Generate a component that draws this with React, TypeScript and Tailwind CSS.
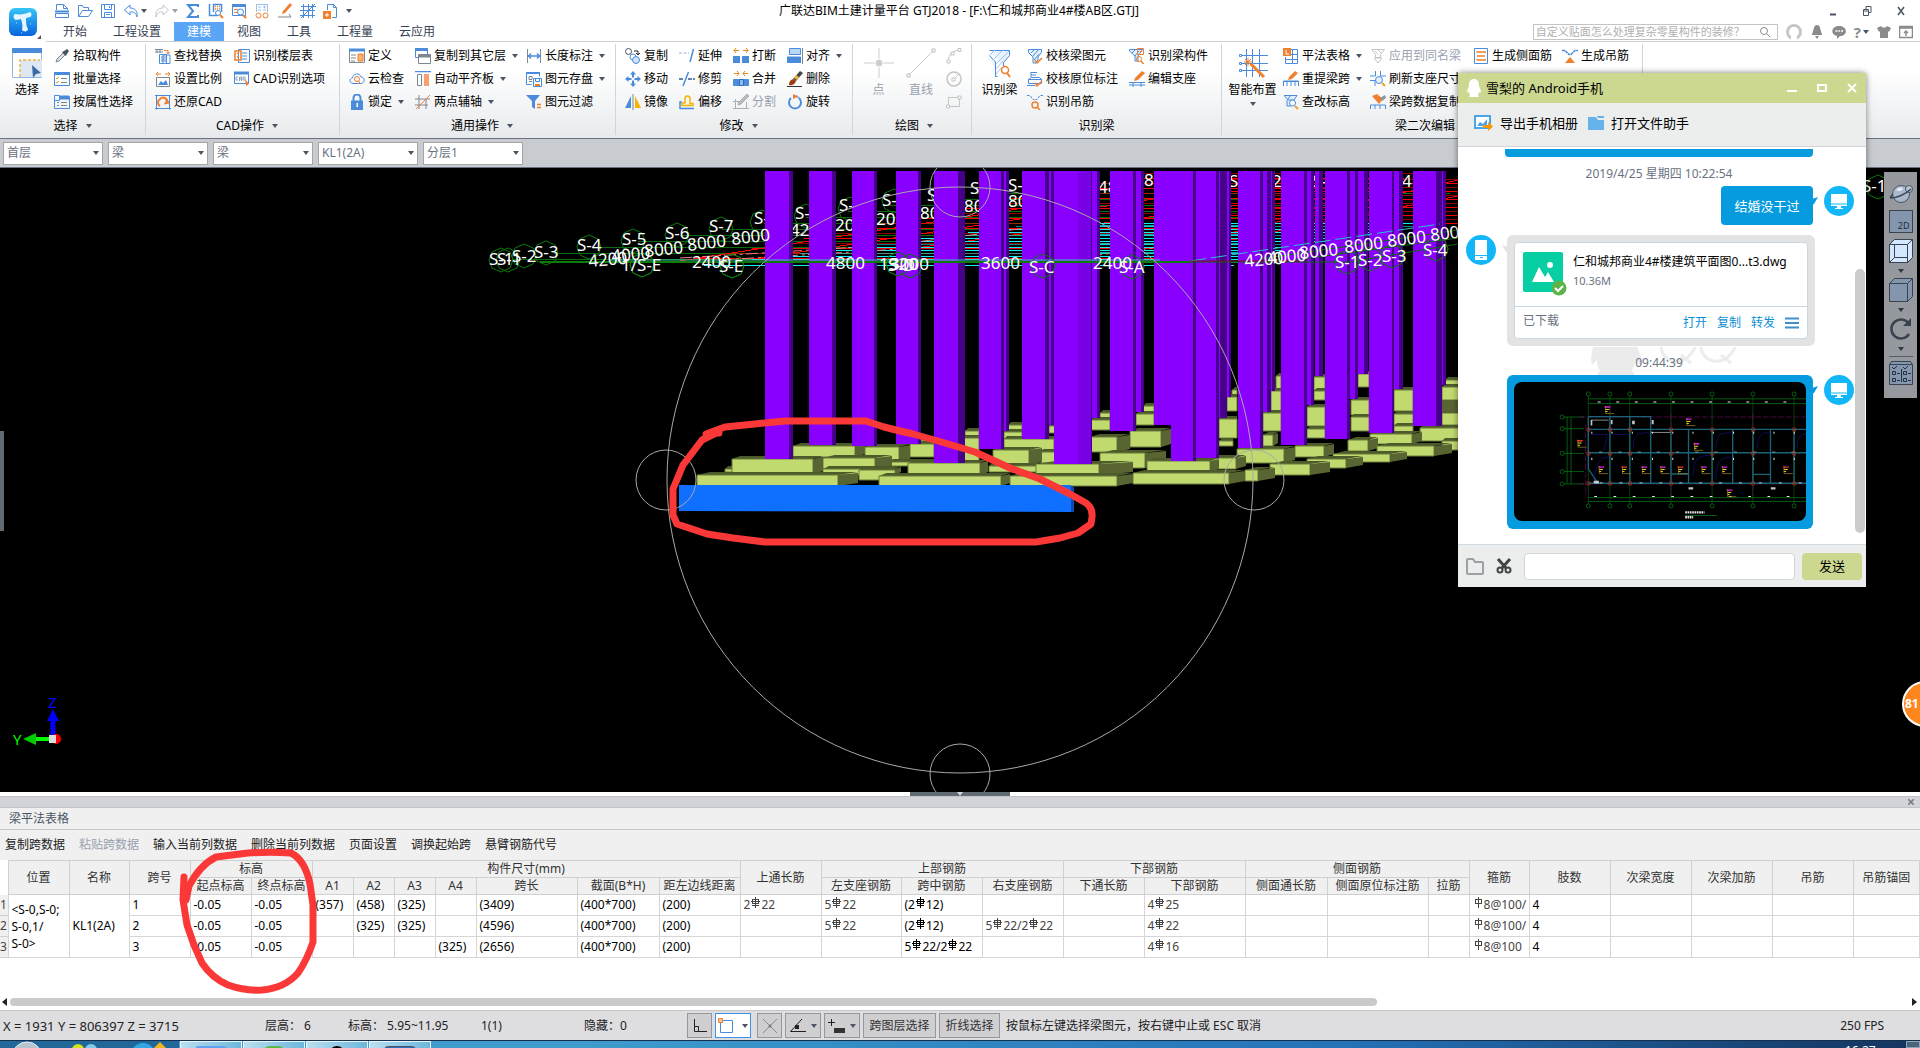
import React from 'react';

const B = '#4a8cdb';
const O = '#f07f2e';
const G = '#7d8790';

const ICONS: Record<string, React.ReactNode> = {
    newFile: <g fill="none" stroke={B}><path d="M2.5 7V1.500h7l4 4V7M9.500 1.500v4h4M1.500 14.500v-4h13v4z" /><path d="M1 8.500h14" strokeWidth="2" /></g>,
    open: <g fill="none" stroke={B}><path d="M1.500 13.500v-11h4l1 2h5v3M1.500 13.500l4-6h10l-4 6z" /></g>,
    save: <g fill="none" stroke={B}><path d="M1.500 1.500h13v13h-13zM4.500 1.500v5h7v-5M4.500 14.500v-5h7v5M6 11.500h4M9.500 3v2" /></g>,
    undo: <path d="M7 2L1.500 7 7 12V9c4-.5 6 1 7 5 1-6-2-9-7-9z" fill="none" stroke={B} />,
    redo: <path d="M9 2l5.500 5L9 12V9c-4-.5-6 1-7 5-1-6 2-9 7-9z" fill="none" stroke="#c4c7ca" />,
    sum: <path d="M13 4V2H3l5 6-5 6h10v-2" fill="none" stroke={B} strokeWidth="2" />,
    calcFind: <g fill="none" stroke={B}><path d="M1.500 1v11.500h8M5.500 1v8M13.500 1v8M5.500 1.500h8" strokeWidth="1.500" /><path d="M7 3.500h5M7 6h5" stroke={O} strokeDasharray="1 1" strokeWidth="1.500" /><circle cx="10" cy="10" r="2.500" /><path d="M12 12l3 3" stroke={O} strokeWidth="2" /></g>,
    pageFind: <g fill="none" stroke={B}><path d="M1.500 1.500h13v11h-13z" /><path d="M1 2.500h14" strokeWidth="3" /><path d="M3 6.500h4M3 9.500h3" stroke={O} /><circle cx="9.500" cy="9" r="3" fill="#fff" /><path d="M12 12l3 3" stroke={O} strokeWidth="2" /></g>,
    glasses: <g fill="none" stroke="#9cc0ea"><path d="M2.500 9V1.500h11V9M4 4h3M9 4h3M4 7h3M9 7h3M10.500 2.500v3" /><circle cx="4.500" cy="12.500" r="2.500" stroke={O} /><circle cx="11.500" cy="12.500" r="2.500" stroke={O} /></g>,
    pen: <g><path d="M13 0l2 2-7 8-3 1 1-3z" fill={O} /><path d="M1 14h13l-2-3" fill="none" stroke={G} /></g>,
    gridLines: <g stroke={B} fill="none"><path d="M1 3.500h15M0 7.500h15M0 12.500h15M3.500 1v14M8.500 1v14M12.500 1v14M1 15L15 1" /></g>,
    addDoc: <g fill="none" stroke={B}><path d="M4.500 7V1.500h6l3 3v10H9M10.500 1.500v3h3" /><path d="M0 8h8v8H0z" fill={O} stroke="none" /><path d="M4 10v4M2 12h4" stroke="#fff" /></g>,
    picker: <g><path d="M2 14l1-3 6-6 2 2-6 6z" fill="#d9e2ea" stroke={G} /><path d="M8 4l4 4 1-2 2-3-2-2-3 2z" fill="#4a5560" /></g>,
    batch: <g fill="none" stroke={B}><path d="M.500 1.500h15v13H.500z" /><path d="M0 2.500h16" strokeWidth="3" /><path d="M2 7l1 1 2-2M2 11l1 1 2-2" stroke="#f0a030" /><path d="M7 7.500h6M7 11.500h6" stroke={G} /></g>,
    attr: <g fill="none" stroke={B}><path d="M.500 1.500h5v5h-5zM.500 4.500v10h15v-12h-9" /><path d="M6 3.500h9" strokeWidth="4" /><path d="M3 8.500h2M7 8.500h6M3 11.500h2M7 11.500h6" stroke={G} /></g>,
    replace: <g fill="none" stroke={G}><path d="M0 1.500h8M0 4h8M2 1v4M5 1v4" /><path d="M9 2.500h4v3M11.500 4l1.500 2 1.500-2" stroke={O} /><path d="M4.500 6.500h7v9h-7zM6 9h6M6 11h6M6 13h6" stroke={B} /><path d="M8 7h7v8.500H8z" stroke={B} /></g>,
    scale: <g><path d="M1 3h5M10 3h5M3 1L1 3l2 2M13 1l2 2-2 2" fill="none" stroke={O} /><path d="M1.500 6.500h13v9h-13z" fill="#fff" stroke={G} /><path d="M3 14l3-4 2 2 3-3 2 5z" fill={B} /></g>,
    restore: <g fill="none" stroke={B}><path d="M1.500 1v14.500M14.500 1v14.500M0 1.500h16M0 14.500h16" /><path d="M5 12a4 4 0 0 1 0-7 4 4 0 0 1 7 2" stroke={O} strokeWidth="2" /><path d="M9 10l5-1-2-4" fill={O} stroke={O} /></g>,
    floor: <g fill="none" stroke={B}><path d="M4.500 1.500h11v13h-11zM8 5h5M8 8h5M8 11h5" /><path d="M1 3h6v9H1zM3 5.500h2M3 9h2" stroke={O} strokeWidth="1.500" /></g>,
    cadOpt: <g fill="none" stroke={B}><path d="M.500 1.500h14v11H.500z" /><path d="M0 2h15" strokeWidth="3" /><path d="M4 6H2v3h2M5.500 10V6h2v4M5.500 8h2M9 6h2v3H9z" stroke="#8ea4b8" /><path d="M11 8l4 5-3 2z" fill={O} stroke="none" /></g>,
    define: <g fill="none"><path d="M.500 1.500h15v13H.500z" stroke={G} /><path d="M0 2h16" stroke={B} strokeWidth="3" /><path d="M2 7h5M2 10h5M2 13h4" stroke={G} /><path d="M9 6h5v7H9z" fill="#f9b56f" stroke={O} /></g>,
    cloud: <g fill="none" stroke={B}><path d="M4 12.500C0 12 0 7.500 3.500 7 4 2 11 1.500 12 6c4 0 4.500 6 0 6.500z" /><circle cx="8" cy="8" r="2.500" stroke={O} /><path d="M9.500 10l2 3" stroke={O} /></g>,
    lock: <g><path d="M4.500 7V4a3.500 3.500 0 0 1 7 0v3" fill="none" stroke={B} strokeWidth="2" /><path d="M2 6.500h12V16H2z" fill={B} /><path d="M7.500 9h1.500v4H7.500z" fill="#fff" /></g>,
    copyLayer: <g fill="#fff" stroke={G}><path d="M.500.500h12v9H.500z" stroke={B} /><path d="M0 1.500h13" stroke={B} strokeWidth="3" /><path d="M3.500 6.500h12v9h-12z" /><path d="M3 8h13" strokeWidth="3" /></g>,
    alignTop: <g><path d="M0 .500h16" stroke={B} strokeWidth="1.500" /><path d="M2.500 3.500h4v11h-4z" fill="#fff" stroke={G} /><path d="M9 3h5v12H9z" fill="#f9a070" /></g>,
    twoPoint: <g fill="none" stroke={G}><path d="M0 5h15M0 11h13M4 1v14M11 5v10" /><path d="M1 15L15 1" stroke={O} /></g>,
    length: <g fill="none" stroke={B}><path d="M1.500 1v14M14.500 1v14" stroke={G} /><path d="M3 8h10M5 5.500L2.500 8 5 10.500M11 5.500L13.500 8 11 10.500" strokeWidth="1.500" /></g>,
    disk: <g fill="none" stroke={B}><path d="M.500 1.500h13v4M.500 1.500v12h5" /><path d="M0 2h14" strokeWidth="2" /><path d="M3 5.500h3v3H3zM3 10.500h3" stroke={G} /><path d="M7.500 7.500h8v8h-8zM9.500 8v2.500h4V8" stroke={B} fill="#fff" /><path d="M9 13h5v2H9z" fill={O} stroke="none" /></g>,
    filter: <g><path d="M0 1h14L9 7v8l-3-2V7z" fill={B} /><path d="M11 10.500h4M11 13.500h4" stroke={O} strokeWidth="1.500" /></g>,
    copy: <g fill="none" stroke="#4b5662"><circle cx="3.500" cy="3.500" r="3" /><path d="M9 3h4v3M11 5l2 2 2-2" stroke="#222" /><circle cx="8" cy="9" r="3" stroke={B} /><circle cx="11" cy="12" r="3.500" fill="#cfe2f8" stroke={B} /></g>,
    move: <g fill={B}><path d="M8 0l3 3.500H5zM8 16l3-3.500H5zM0 8l3.500-3v6zM16 8l-3.500-3v6z" /><path d="M8 3v3.500M8 9.500V13M3 8h3.500M9.500 8H13" stroke={B} strokeWidth="2" /></g>,
    mirror: <g><path d="M6 2v12H0z" fill={B} /><path d="M10 2v12h6z" fill="#f7b500" /><path d="M8 0v16" stroke={G} /></g>,
    extend: <g fill="none" stroke={B}><path d="M0 5h10" strokeDasharray="3 1.500" stroke="#8fb2da" /><path d="M14.500 1L11 14" strokeWidth="1.500" /></g>,
    trim: <g fill="none" stroke="#365d8c"><path d="M0 8h5M9 8h7" strokeDasharray="4 1" strokeWidth="1.500" /><path d="M9.500 1L4 15" stroke={B} strokeWidth="1.500" /></g>,
    offset: <g fill="none"><path d="M3 11.500h11v-2h-3V5c0-4-5-4-5 0v4H3z" stroke="#f7b500" strokeWidth="1.500" /><path d="M1 15V8h2M1 14.500h14" stroke={B} strokeWidth="1.500" /></g>,
    breakIt: <g><path d="M1 2.500h5M10 2.500h5M3 0L1 2.500 3 5M13 0l2 2.500L13 5" fill="none" stroke="#e08a1a" /><path d="M0 8h7v7H0zM9 8h7v7H9z" fill={B} /></g>,
    merge: <g><path d="M1 2.500h5M10 2.500h5M4 0l2 2.500L4 5M12 0l-2 2.500L12 5" fill="none" stroke="#e08a1a" /><path d="M.500 8.500h15v6H.500z" fill={B} stroke={B} /><path d="M6.500 8.500h4v6h-4z" fill="#8dbcf2" stroke="#2c6cb8" /></g>,
    split: <g fill="none" stroke="#a9aeb3"><path d="M0 7.500h7M2.500 5v10M0 14.500h16M13.500 8v7" /><path d="M14 0l2 2-8 8-3 1 1-3z" fill="#b9bdc1" /></g>,
    align: <g><path d="M2.500 .500h11v6h-11z" fill="#b9d6f6" stroke={B} /><path d="M0 8.500h14V15H0z" fill={B} /><path d="M15.500 0v16" stroke={G} /></g>,
    remove: <g><path d="M13 0l3 2-7 8-3-2z" fill="#444" /><path d="M9 4l3 2-2 3-3-2z" fill="#f0b53c" /><path d="M6 8l3 2c-1 4-5 5-7 4 0-3 1-5 4-6z" fill="#9c3e12" /><path d="M0 15.500h15" stroke="#333" /></g>,
    rotate: <g fill="none"><path d="M12 4a6 6 0 1 1-8 0" stroke={B} strokeWidth="2" /><path d="M12 4a6 6 0 0 0-5-2" stroke="#8fb8ea" strokeWidth="2" /><path d="M6 0l5 2.500L6 5z" fill={O} /></g>,
    arc: <g fill="none" stroke="#c4c4c4"><path d="M2 14C2 7 7 2 14 2" /><path d="M1 12h3v3H1zM5 4h3v3H5zM12 .500h3v3h-3z" fill="#fff" /></g>,
    circle: <g fill="none" stroke="#c4c4c4"><circle cx="8" cy="8" r="7" strokeWidth="1.500" /><path d="M7 9l6-6" /><path d="M6 7h3v3H6z" fill="#fff" /></g>,
    rect: <g fill="none" stroke="#c4c4c4"><path d="M2.500 3.500h11v9h-11z" /><path d="M.500 11h3v3h-3zM12 2h3v3h-3z" fill="#fff" /></g>,
    beamCheck: <g fill="none" stroke={B}><path d="M1.500 1.500h13v3L11 9v3l-2 3H6V9L1.500 4.500z" fill="#e3effc" /><path d="M4 5l4-4M6 8l6-7M7 12l5-6" /><path d="M8 12l2 3 5-5" stroke={O} strokeWidth="1.500" /></g>,
    noteCheck: <g fill="none" stroke={B}><path d="M4 1v5M4 1.500h6M4 4h5M1.500 12.500v-4l3-2h8l2 2v4zM0 14.500h8M1.500 8.500h13" /><path d="M8 12l2 3 5-5" stroke={O} strokeWidth="1.500" /></g>,
    hanger: <g fill="none" stroke={B}><path d="M0 1.500h3l3 4h4l3-4h3" strokeDasharray="2.500 1" /><circle cx="8" cy="11" r="3" stroke={O} strokeWidth="1.500" /><path d="M10 13l3 3" stroke={O} strokeWidth="1.500" /></g>,
    beamPart: <g fill="none" stroke={B}><path d="M.500 1.500h13L9 8v5H6V8L.500 3z" fill="#e3effc" /><path d="M3 5l4-4M6 8l4-5" /><path d="M8.500.500h6v6h-6zM11 3.500h2" stroke={O} /><circle cx="10" cy="11" r="2.500" stroke={O} /><path d="M12 13l2.500 3" stroke={O} strokeWidth="1.500" /></g>,
    support: <g><path d="M13 0l3 2-7 7-4 1 1-3z" fill={O} /><path d="M0 11.500h16M0 14h16M4 11v5M12 11v5" stroke={B} fill="none" /></g>,
    flatTable: <g fill="none" stroke={B}><path d="M5 1.500h9.500v14H2.500V9M9.500 1v14M2.500 11.500h12M8 6.500h6" /><path d="M0 0h8v8H0z" fill={O} stroke="none" /><path d="M3 2v4h3" stroke="#fff" /></g>,
    respan: <g fill="none" stroke={B}><path d="M12 0l3 2-6 6-4 1 1-3z" fill={O} stroke="none" /><path d="M.500 15v-5h15v5M4 10v5M8 10v5M12 10v5M0 10.500h16" /></g>,
    level: <g fill="none" stroke={B}><path d="M1 1.500h13L11 6H5L1.500 2M4 6v6h4M8 1l-3 4" fill="#e3effc" /><circle cx="9.500" cy="9" r="3" fill="#fff" /><path d="M12 12l3 3" stroke="#f0a030" strokeWidth="2" /></g>,
    applySame: <g fill="none" stroke="#c3c6c9"><path d="M1.500 1.500h13l-4 5v3h-5v-3zM5 3l3 3M7 1l4 4" /><path d="M4 10h8l-4 5z" /></g>,
    refresh: <g fill="none" stroke={B}><path d="M5.500 0v5H0M10.500 0v5H16M0 9.500h5V15" /><circle cx="9" cy="9" r="3.500" fill="#e3effc" /><path d="M12 12l3 3" stroke="#f0a030" strokeWidth="2" /></g>,
    spanCopy: <g><path d="M2 2l5-2 6 5-4 5z" fill={O} /><path d="M10 4l5-3 1 3-4 3z" fill="#8c959c" /><path d="M.500 15v-4h15v4M5 11v4M10 11v4" fill="none" stroke={B} /></g>,
    sideBar: <g fill="none" stroke={B}><path d="M1.500.500h13v15h-13z" /><path d="M4 4.500V4h8v1M4 8h8M4 12h8v-1M4 12v-1" stroke={O} strokeWidth="1.500" /></g>,
    genHanger: <g fill="none" stroke={B}><path d="M0 2.500h3l4 4h2l4-4h3" strokeWidth="1.500" strokeDasharray="3 .500" /><path d="M8 9l5 6H3z" fill={O} stroke="none" /></g>,
};

const Icon = ({ name, className = 'w-4 h-4' }: { name: string; className?: string }) => (
    <svg viewBox="0 0 16 16" className={`${className} shrink-0`}>{ICONS[name]}</svg>
);

const Caret = ({ className = 'text-gray-600' }: { className?: string }) => (
    <svg viewBox="0 0 6 4" className={`w-[6px] h-[4px] shrink-0 ${className}`}><path d="M0 0h6L3 4z" fill="currentColor" /></svg>
);

type Tool = { icon: string; label?: string; menu?: boolean; off?: boolean };

const ToolCol = ({ items, className }: { items: Tool[]; className: string }) => (
    <div className={`flex flex-col shrink-0 ${className}`}>
        {items.map((t) => (
            <button key={t.icon} disabled={t.off} className={`h-[23px] flex items-center gap-[3px] whitespace-nowrap ${t.off ? 'text-gray-400' : 'text-black'}`}>
                <Icon name={t.icon} />
                {t.label && <span>{t.label}</span>}
                {t.menu && <span className="pl-[3px]"><Caret /></span>}
            </button>
        ))}
    </div>
);

const Group = ({ title, menu = true, className, children }: { title: string; menu?: boolean; className: string; children: React.ReactNode }) => (
    <section className={`flex flex-col shrink-0 border-r border-gray-300 ${className}`}>
        <div className="h-[70px] flex">{children}</div>
        <div className="flex-1 flex items-center justify-center gap-2 pt-[3px] whitespace-nowrap">
            {title}
            {menu && <Caret />}
        </div>
    </section>
);

const BigButton = ({ label, className, off, menu, children }: { label: string; className: string; off?: boolean; menu?: boolean; children: React.ReactNode }) => (
    <button className={`flex flex-col items-center shrink-0 pt-1 ${off ? 'text-gray-400' : 'text-black'} ${className}`}>
        {children}
        <span className="mt-1 leading-4 whitespace-nowrap">{label}</span>
        {menu && <span className="mt-1"><Caret /></span>}
    </button>
);

const QUICK = ['newFile', 'open', 'save', 'undo', 'redo', 'sum', 'calcFind', 'pageFind', 'glasses', 'pen', 'gridLines', 'addDoc'];
const TABS = ['开始', '工程设置', '建模', '视图', '工具', '工程量', '云应用'];

function Header() {
    return (
        <header className="h-[42px] flex bg-white shrink-0">
            <div className="w-[46px] relative shrink-0 pt-2 pl-[9px]">
                <svg viewBox="0 0 28 28" className="w-7 h-7">
                    <defs>
                        <linearGradient id="logo" x1="0" y1="0" x2="0" y2="1">
                            <stop offset="0" stopColor="#35c5f5" /><stop offset="1" stopColor="#0a63dd" />
                        </linearGradient>
                    </defs>
                    <rect width="28" height="28" rx="6" fill="url(#logo)" />
                    <path d="M6 6c5 1 10 0 15-2 2 1 2 4 0 5l-4 1c0 4 0 8 2 11 0 3-5 3-6 1 1-4 0-8-1-11l-5 1c-3-1-3-5-1-6z" fill="#e4f6ff" />
                    <path d="M7 15h1M21 16h1M12 25h1" stroke="#bfe9ff" />
                </svg>
                <svg viewBox="0 0 4 4" className="absolute right-[5px] bottom-[3px] w-1 h-1"><path d="M4 0v4H0z" fill="#555" /></svg>
            </div>
            <div className="flex-1 flex flex-col border-b border-[#cfcfcf]">
                <div className="h-[22px] grid grid-cols-[1fr_auto_1fr] items-center">
                    <div className="flex items-center gap-[7px] pl-2">
                        {QUICK.map((q) => (
                            <button key={q} className="flex items-center gap-[2px]">
                                <Icon name={q} />
                                {q === 'undo' && <Caret />}
                                {q === 'redo' && <Caret className="text-gray-400" />}
                            </button>
                        ))}
                        <Caret />
                    </div>
                    <h1 className="pr-[48px]">广联达BIM土建计量平台 GTJ2018 - [F:\仁和城邦商业4#楼AB区.GTJ]</h1>
                    <div className="flex justify-end gap-5 pr-3 text-gray-600">
                        <button aria-label="最小化"><svg viewBox="0 0 14 14" className="w-[14px] h-[14px]"><path d="M4 10.500h6" stroke="currentColor" strokeWidth="2" /></svg></button>
                        <button aria-label="还原"><svg viewBox="0 0 14 14" className="w-[14px] h-[14px]"><path d="M3.500 5.500h5v6h-5zM6 5V2.500h5v6H9M3 7h6" fill="none" stroke="currentColor" /></svg></button>
                        <button aria-label="关闭"><svg viewBox="0 0 14 14" className="w-[14px] h-[14px]"><path d="M4 3l6 8M10 3l-6 8" fill="none" stroke="currentColor" strokeWidth="1.500" /></svg></button>
                    </div>
                </div>
                <div className="h-[19px] flex items-stretch">
                    <nav className="flex pl-1">
                        {TABS.map((t) => (
                            <button key={t} className={`px-[13px] text-[12px] ${t === '建模' ? 'bg-[#5aa5f5] text-white' : 'text-gray-700'}`}>{t}</button>
                        ))}
                    </nav>
                    <div className="ml-auto flex items-center gap-2 pr-[7px] text-[#8b8b8b]">
                        <label className="w-[245px] h-4 flex items-center border border-[#c4c4c4] px-[2px]">
                            <input aria-label="搜索" placeholder="自定义贴面怎么处理复杂零星构件的装修？" className="flex-1 min-w-0 outline-none text-[11px] placeholder:text-[#b0b0b0]" />
                            <svg viewBox="0 0 12 12" className="w-3 h-3 mr-1"><circle cx="5" cy="5" r="3.500" fill="none" stroke="currentColor" /><path d="M8 8l3 3" stroke="currentColor" /></svg>
                        </label>
                        <svg viewBox="0 0 16 16" className="w-4 h-4"><circle cx="8" cy="8" r="6.500" fill="none" stroke="#c6c6c6" strokeWidth="3" /><circle cx="8" cy="7" r="4" fill="#fff" /><path d="M5 16v-4h6v4z" fill="#fff" /></svg>
                        <svg viewBox="0 0 14 14" className="w-[14px] h-[14px]"><path d="M7 0c4 0 3 6 5 9v1H2V9c2-3 1-9 5-9zM5 11h4l-2 3z" fill="currentColor" /></svg>
                        <svg viewBox="0 0 14 14" className="w-[14px] h-[14px]"><path d="M7 1c9 0 9 10 1 10l-3 3v-3C-2 10-1 1 7 1z" fill="currentColor" /><path d="M3.500 6h2M6.500 6h1.500M9 6h2" stroke="#fff" strokeWidth="1.500" /></svg>
                        <span className="flex items-center gap-[2px] text-[15px] font-bold">?<Caret /></span>
                        <svg viewBox="0 0 14 14" className="w-[14px] h-[14px]"><path d="M0 3l4-2c1 2 5 2 6 0l4 2-2 4-1-1v7H3V6L2 7z" fill="currentColor" /></svg>
                        <svg viewBox="0 0 14 14" className="w-[14px] h-[14px]"><path d="M.500 1.500h13v11H.500zM0 3h14M7 11V6M5 8l2-2 2 2" fill="none" stroke="currentColor" strokeWidth="1.500" /></svg>
                    </div>
                </div>
            </div>
        </header>
    );
}

function Ribbon() {
    return (
        <div className="h-[97px] flex shrink-0 pt-[2px] pb-[3px] bg-gradient-to-b from-white from-30% to-[#e7eaec] border-b border-gray-500 overflow-hidden">
            <Group title="选择" className="w-[146px]">
                <BigButton label="选择" className="w-[54px]">
                    <svg viewBox="0 0 30 30" className="w-[30px] h-[30px]">
                        <path d="M.500.500h29v29H.500z" fill="#fff" stroke="#8fb8e4" /><path d="M0 0h30v5H0z" fill={B} />
                        <path d="M8 12h22v17H8z" fill="#dfe7f2" /><path d="M8 29V12h20" fill="none" stroke="#f0b53c" strokeWidth="1.500" strokeDasharray="3 2" />
                        <path d="M20 17l9 8-5 1-3 4z" fill="#3a6ba5" />
                    </svg>
                </BigButton>
                <ToolCol className="w-[90px]" items={[{ icon: 'picker', label: '拾取构件' }, { icon: 'batch', label: '批量选择' }, { icon: 'attr', label: '按属性选择' }]} />
            </Group>
            <Group title="CAD操作" className="w-[194px] pl-[9px]">
                <ToolCol className="w-[79px]" items={[{ icon: 'replace', label: '查找替换' }, { icon: 'scale', label: '设置比例' }, { icon: 'restore', label: '还原CAD' }]} />
                <ToolCol className="w-[100px]" items={[{ icon: 'floor', label: '识别楼层表' }, { icon: 'cadOpt', label: 'CAD识别选项' }]} />
            </Group>
            <Group title="通用操作" className="w-[276px] pl-[9px]">
                <ToolCol className="w-[66px]" items={[{ icon: 'define', label: '定义' }, { icon: 'cloud', label: '云检查' }, { icon: 'lock', label: '锁定', menu: true }]} />
                <ToolCol className="w-[111px]" items={[{ icon: 'copyLayer', label: '复制到其它层', menu: true }, { icon: 'alignTop', label: '自动平齐板', menu: true }, { icon: 'twoPoint', label: '两点辅轴', menu: true }]} />
                <ToolCol className="w-[86px]" items={[{ icon: 'length', label: '长度标注', menu: true }, { icon: 'disk', label: '图元存盘', menu: true }, { icon: 'filter', label: '图元过滤' }]} />
            </Group>
            <Group title="修改" className="w-[237px] pl-[9px]">
                <ToolCol className="w-[54px]" items={[{ icon: 'copy', label: '复制' }, { icon: 'move', label: '移动' }, { icon: 'mirror', label: '镜像' }]} />
                <ToolCol className="w-[54px]" items={[{ icon: 'extend', label: '延伸' }, { icon: 'trim', label: '修剪' }, { icon: 'offset', label: '偏移' }]} />
                <ToolCol className="w-[54px]" items={[{ icon: 'breakIt', label: '打断' }, { icon: 'merge', label: '合并' }, { icon: 'split', label: '分割', off: true }]} />
                <ToolCol className="w-[58px]" items={[{ icon: 'align', label: '对齐', menu: true }, { icon: 'remove', label: '删除' }, { icon: 'rotate', label: '旋转' }]} />
            </Group>
            <Group title="绘图" className="w-[119px] pl-1">
                <BigButton label="点" off className="w-[43px]">
                    <svg viewBox="0 0 30 30" className="w-[30px] h-[30px]"><path d="M15 0v30M0 15h30" stroke="#cdcdcd" /><circle cx="15" cy="15" r="4" fill="#cdcdcd" stroke="#fff" /></svg>
                </BigButton>
                <BigButton label="直线" off className="w-[42px]">
                    <svg viewBox="0 0 30 30" className="w-[30px] h-[30px]"><path d="M3 27L27 3" stroke="#cdcdcd" /><path d="M1 26h3v3H1zM26 1h3v3h-3z" fill="#fff" stroke="#bbb" /></svg>
                </BigButton>
                <ToolCol className="w-5 pl-1" items={[{ icon: 'arc' }, { icon: 'circle' }, { icon: 'rect' }]} />
            </Group>
            <Group title="识别梁" menu={false} className="w-[250px]">
                <BigButton label="识别梁" className="w-[55px]">
                    <svg viewBox="0 0 30 30" className="w-[30px] h-[30px]">
                        <path d="M4.500 2.500h20v5l-6 7v4M12.500 28.500h-2V14l-6-6.500" fill="#eaf3fd" stroke={B} />
                        <path d="M4 8l6-6M8 12L18 2M11 16L24 3M11 21l7-8M11 26l5-6" stroke="#9cc4f0" />
                        <circle cx="20" cy="22" r="3.500" fill="none" stroke={O} strokeWidth="1.500" /><path d="M22 25l3 4" stroke={O} strokeWidth="2" />
                    </svg>
                </BigButton>
                <ToolCol className="w-[102px]" items={[{ icon: 'beamCheck', label: '校核梁图元' }, { icon: 'noteCheck', label: '校核原位标注' }, { icon: 'hanger', label: '识别吊筋' }]} />
                <ToolCol className="w-[86px]" items={[{ icon: 'beamPart', label: '识别梁构件' }, { icon: 'support', label: '编辑支座' }]} />
            </Group>
            <Group title="梁二次编辑" className="w-[421px]">
                <BigButton label="智能布置" menu className="w-[61px]">
                    <svg viewBox="0 0 30 30" className="w-[30px] h-[30px]">
                        <path d="M8.500 1v28M14.500 1v28M21.500 1v28M4 7.500h26M4 15.500h26M4 22.500h26" stroke={B} />
                        <path d="M1.500 6.500h2v2h-2zM1.500 14.500h2v2h-2zM1.500 21.500h2v2h-2z" fill="#fff" stroke={B} />
                        <path d="M13 16l13 13" stroke={O} strokeWidth="3" /><path d="M10 10v8M6 14h8M7 11l6 6M13 11l-6 6" stroke={O} />
                    </svg>
                </BigButton>
                <ToolCol className="w-[87px]" items={[{ icon: 'flatTable', label: '平法表格', menu: true }, { icon: 'respan', label: '重提梁跨', menu: true }, { icon: 'level', label: '查改标高' }]} />
                <ToolCol className="w-[103px]" items={[{ icon: 'applySame', label: '应用到同名梁', off: true }, { icon: 'refresh', label: '刷新支座尺寸' }, { icon: 'spanCopy', label: '梁跨数据复制' }]} />
                <ToolCol className="w-[89px]" items={[{ icon: 'sideBar', label: '生成侧面筋' }]} />
                <ToolCol className="w-[70px]" items={[{ icon: 'genHanger', label: '生成吊筋' }]} />
            </Group>
        </div>
    );
}

function FilterBar() {
    return (
        <div className="h-[29px] flex items-center gap-[5px] px-[3px] shrink-0 bg-[#c8cbcf] border-b border-gray-500">
            {['首层', '梁', '梁', 'KL1(2A)', '分层1'].map((v, i) => (
                <div key={i} className="relative w-[100px] h-[23px]">
                    <select aria-label={`筛选${i + 1}`} className="w-full h-full appearance-none bg-white border border-[#a5a5a5] px-[3px] text-gray-500">
                        <option>{v}</option>
                    </select>
                    <span className="absolute right-1 top-0 h-full flex items-center pointer-events-none"><Caret /></span>
                </div>
            ))}
        </div>
    );
}

// footing blocks: front face x1, y1, x2, y2, then depth of the side face
const SLABS = [
    [697, 475, 838, 486, 20], [732, 459, 813, 474, 10], [725, 469, 733, 472, 0], [793, 446, 855, 457, 10], [823, 458, 875, 469, 17],
    [823, 469, 895, 475, 6], [859, 470, 895, 480, 0], [865, 447, 899, 462, 11], [910, 444, 934, 457, 0], [908, 463, 980, 475, 8],
    [879, 476, 1001, 486, 9], [890, 462, 934, 466, 0], [921, 440, 934, 444, 0], [962, 438, 979, 461, 0], [965, 431, 979, 437, 0],
    [989, 466, 1037, 472, 0], [1010, 476, 1117, 486, 16], [1036, 464, 1099, 475, 34], [993, 450, 1029, 465, 13], [1004, 439, 1054, 450, 0],
    [1041, 452, 1055, 463, 0], [1008, 425, 1022, 430, 0], [1004, 432, 1022, 439, 0], [1049, 426, 1055, 433, 0], [1090, 437, 1117, 452, 13],
    [1100, 453, 1145, 468, 21], [1091, 420, 1110, 430, 0], [1100, 413, 1110, 418, 0], [1130, 431, 1161, 447, 10], [1136, 414, 1154, 425, 0],
    [1143, 406, 1154, 412, 0], [1133, 473, 1229, 484, 16], [1147, 461, 1210, 472, 9], [1196, 458, 1236, 469, 10],
    [1219, 419, 1237, 438, 0], [1219, 441, 1233, 446, 0], [1227, 397, 1237, 411, 0], [1232, 390, 1237, 395, 0], [1237, 449, 1284, 463, 11],
    [1245, 470, 1258, 481, 17], [1270, 464, 1310, 475, 20], [1263, 413, 1281, 431, 0], [1271, 391, 1281, 411, 0], [1276, 376, 1281, 389, 0],
    [1263, 435, 1273, 446, 5], [1295, 446, 1324, 457, 10], [1307, 459, 1346, 468, 17], [1307, 407, 1325, 426, 0], [1314, 377, 1325, 390, 0],
    [1314, 391, 1325, 400, 0], [1307, 429, 1325, 438, 0], [1348, 440, 1368, 451, 10], [1333, 454, 1390, 462, 17], [1351, 400, 1369, 415, 0],
    [1358, 374, 1369, 387, 0], [1351, 417, 1369, 431, 0], [1370, 434, 1412, 444, 10], [1377, 446, 1434, 456, 18], [1394, 390, 1413, 411, 0],
    [1394, 414, 1413, 425, 0], [1394, 426, 1413, 432, 0], [1420, 428, 1460, 441, 0], [1442, 441, 1460, 450, 0], [1442, 387, 1460, 400, 0],
    [1445, 380, 1460, 385, 0], [1442, 413, 1460, 425, 0],
];

// columns back to front: left, bright edge, dark edge, bottom
const COLUMNS = [
    [1003, 1006, 1009, 431], [1049, 1051, 1054, 425], [1091, 1097, 1100, 418], [1136, 1141, 1144, 412], [1219, 1220, 1227, 418],
    [1227, 1229, 1231, 397], [1263, 1267, 1271, 412], [1271, 1272, 1275, 391], [1315, 1319, 1323, 376], [1307, 1311, 1314, 405],
    [1358, 1364, 1368, 374], [1350, 1355, 1358, 399], [1394, 1399, 1403, 389], [1442, 1443, 1446, 385], [765, 789, 793, 459],
    [809, 832, 836, 445], [852, 874, 877, 446], [896, 918, 921, 444], [934, 958, 965, 463], [979, 1001, 1004, 449],
    [1022, 1045, 1049, 439], [1054, 1091, 1092, 464], [1110, 1133, 1136, 431], [1154, 1193, 1196, 425], [1171, 1193, 1196, 461],
    [1196, 1216, 1219, 458], [1238, 1260, 1263, 448], [1281, 1304, 1307, 445], [1325, 1347, 1350, 439], [1369, 1392, 1394, 433], [1413, 1436, 1442, 426],
];

const BACK_LABELS: [number, number, string][] = [
    [754, 224, 'S-8'], [795, 219, 'S-9'], [790, 236, '4200'], [839, 211, 'S-10'], [835, 231, '2000'], [882, 206, 'S-11'], [876, 225, '2000'],
    [927, 201, 'S-12'], [920, 219, '8000'], [970, 194, 'S-13'], [964, 212, '8000'], [1008, 191, 'S-14'], [1008, 207, '8000'],
    [1098, 193, '4800'], [1144, 186, '8000'], [1229, 187, 'S-E'], [1272, 187, '2-1'], [1312, 187, 'S-F'], [1402, 187, '4'],
];

const LABELS: [number, number, string, number][] = [
    [489, 265, 'S-1', 0], [497, 265, 'S-1', 0], [512, 262, 'S-2', 0], [534, 258, 'S-3', 0], [577, 251, 'S-4', 0], [622, 245, 'S-5', 0],
    [665, 239, 'S-6', 0], [709, 232, 'S-7', 0], [589, 267, '4200', -5], [612, 262, '4000', -5], [645, 257, '8000', -6], [688, 251, '8000', -7],
    [732, 245, '8000', -7], [621, 271, '1/S-E', 0], [692, 268, '2400', 0], [719, 272, 'S-E', 0], [826, 269, '4800', 0], [879, 270, '1320', 0],
    [888, 271, 'S-D', 0], [890, 270, '3000', 0], [981, 269, '3600', 0], [1029, 273, 'S-C', 0], [1093, 269, '2400', 0], [1119, 273, 'S-A', 0],
    [1245, 267, '4200', -5], [1268, 264, '4000', -5], [1300, 259, '8000', -6], [1345, 253, '8000', -7], [1388, 247, '8000', -7], [1431, 241, '8000', -7],
    [1335, 268, 'S-1', 0], [1358, 266, 'S-2', 0], [1382, 262, 'S-3', 0], [1423, 256, 'S-4', 0], [1862, 192, 'S-1', 0],
];

const hexAt = (x: number, y: number) => `M${x - 12} ${y}l3-8 9-4 9 4 3 8-3 8-9 4-9-4z`;
const BUBBLES = [[501, 260], [508, 260], [524, 256], [546, 253], [589, 247], [633, 241], [677, 235], [721, 229], [762, 222], [806, 216], [850, 209], [894, 201], [642, 265], [732, 266], [898, 264], [910, 266], [1043, 266], [1132, 267], [1347, 262], [1370, 259], [1392, 256], [1436, 249], [1878, 187]];

function Viewport() {
    return (
        <main className="flex-1 min-h-0 relative bg-black overflow-hidden">
            <svg viewBox="0 168 1920 624" preserveAspectRatio="xMidYMid slice" className="absolute inset-0 w-full h-full" fontFamily="'Noto Sans', sans-serif" fontSize="17">
                <clipPath id="scene"><path d="M0 171h1458v621H0z" /></clipPath>
                <g clipPath="url(#scene)">
                    <g stroke="#0a7a0a" fill="none">
                        {BUBBLES.map(([x, y], i) => <path key={i} d={hexAt(x, y)} />)}
                    </g>
                    <g stroke="#0a6b0a" shapeRendering="crispEdges">
                        {[0, 1, 2, 3, 4, 5, 6, 7, 8, 9, 10, 11].map((i) => (
                            <path key={i} d={`M${512 + i * 42} ${259 - i * 6}H${900 + i * 50}`} />
                        ))}
                    </g>
                    <g stroke="#ff0000" shapeRendering="crispEdges">
                        {Array.from({ length: 18 }, (_, i) => {
                            const y = 258 - i * 5;
                            return <path key={i} d={`M${700 + i * 26} ${y}H${1180 + i * 14}`} opacity={i % 2 ? 0.55 : 1} />;
                        })}
                        {Array.from({ length: 12 }, (_, i) => (
                            <path key={i} d={`M${1225 + (i % 3) * 14} ${179 + i * 4}H1458`} opacity={i % 2 ? 1 : 0.6} />
                        ))}
                        <path d="M680 261L1030 207M760 258L1180 195M900 250L1240 205M1180 250L1458 196M1200 240L1458 180" />
                    </g>
                    <g stroke="#12eef5" shapeRendering="crispEdges">
                        {Array.from({ length: 15 }, (_, i) => {
                            const y = 223 + i * 3;
                            return <path key={i} d={`M${1040 - i * 24} ${y}H${1430 - i * 14}`} opacity={i % 3 === 1 ? 0.55 : 1} />;
                        })}
                        {[0, 1, 2, 3].map((i) => <path key={i} d={`M${1085 - i * 14} ${226 + i * 9}H1240`} strokeWidth="2" opacity=".7" />)}
                    </g>
                    <path d="M680 258L860 247M720 260L900 249M900 244L1050 225M1090 256L1170 246" stroke="#f08080" strokeDasharray="12 4 3 3" />
                    <g fill="#fff">
                        {BACK_LABELS.map(([x, y, t]) => <text key={`${x}-${y}`} x={x} y={y}>{t}</text>)}
                    </g>
                    {[...SLABS].sort((a, b) => a[3] - b[3]).map(([x1, y1, x2, y2, d], i) => (
                        <g key={i}>
                            <path d={`M${x1} ${y1}l${d / 2 + 3}-3H${x2 + d}L${x2} ${y1}z`} fill="#4d5a29" />
                            <path d={`M${x1} ${y1}H${x2}V${y2}H${x1}z`} fill="#c0da6f" stroke="#6b7a3c" strokeWidth="1" />
                            {d > 0 && <path d={`M${x2} ${y1}L${x2 + d} ${y1 - 2}V${y2 - 3}L${x2} ${y2}z`} fill="#596433" />}
                        </g>
                    ))}
                    <path d="M1442 400h18v13h-18z" fill="#596433" />
                    {COLUMNS.map(([x1, x2, x3, b], i) => (
                        <g key={i}>
                            <path d={`M${x1} 171H${x2}V${b}H${x1}z`} fill="#8a00ff" />
                            <path d={`M${x2} 171H${x3}V${b}H${x2}z`} fill="#46008a" />
                        </g>
                    ))}
                    <path d="M1078 171h13v293h-13z" fill="#7900e6" />
                    <path d="M1195 171h1v254h-1z" fill="#46008a" />
                    <path d="M1190 261L1440 224" stroke="#27c5cb" strokeDasharray="16 5" />
                    <path d="M1180 262H1350L1458 244M1260 259L1458 230M1280 262L1458 238" stroke="#0a6b0a" fill="none" />
                </g>
                <path d="M540 262H1190" stroke="#0c7c0c" strokeWidth="2" />
                <path d="M610 260H1160" stroke="#3fc0b0" />
                <path d="M1190 261H1300" stroke="#7c1020" />
                <g stroke="#0a7a0a" fill="none">
                    {BUBBLES.slice(12).map(([x, y], i) => <path key={i} d={hexAt(x, y)} />)}
                </g>
                <g fill="#fff">
                    {LABELS.map(([x, y, t, r]) => <text key={`${x}-${t}`} x={x} y={y} transform={`rotate(${r} ${x} ${y})`}>{t}</text>)}
                </g>
                <path d="M679 485H1071V512L679 511z" fill="#0f70ff" />
                <path d="M1071 487h3v25h-3z" fill="#0b4bb0" />
                <g fill="none" stroke="#a9a9a9">
                    <circle cx="960" cy="480" r="293" />
                    <circle cx="666" cy="480" r="30" />
                    <circle cx="1254" cy="480" r="30" />
                    <circle cx="960" cy="187" r="30" />
                    <circle cx="960" cy="774" r="30" />
                </g>
                <path d="M719 433L706 434L725 427L755 424L785 421L866 421L884 427L900 431L913 434L945 443L975 452L1010 468L1040 479L1070 494L1086 503Q1093 508 1092 517L1091 524L1078 533L1060 538L1036 542L765 542L733 538L707 534L677 524L673 515V489L683 465L702 440L718 432" fill="none" stroke="#fb3838" strokeWidth="7" strokeLinejoin="round" strokeLinecap="round" />
                <g>
                    <path d="M53 738V720" stroke="#00f" strokeWidth="5" /><path d="M47 721l6-12 6 12z" fill="#00f" />
                    <path d="M50 739H34" stroke="#0f0" strokeWidth="4" /><path d="M36 733v12l-13-6z" fill="#0c0" />
                    <circle cx="56" cy="739" r="5" fill="#f00" /><path d="M49 735h7v8h-7z" fill="#dcdcdc" />
                    <text x="48" y="708" fontSize="15" fill="#00f">Z</text>
                    <text x="13" y="745" fontSize="15" fill="#0f0">Y</text>
                </g>
            </svg>
            <div className="absolute left-0 top-[263px] w-1 h-[100px] bg-[#616b74]" />
            <ViewTools />
            <div className="absolute -right-[28px] top-[513px] w-[46px] h-[46px] rounded-full bg-[#ff861c] border-2 border-white flex items-center pl-px text-white font-bold">81</div>
        </main>
    );
}

function ViewTools() {
    const btn = 'w-6 flex items-center justify-center';
    return (
        <aside className="absolute right-[3px] top-1 w-[33px] h-[226px] bg-[#95989d] flex flex-col items-center pt-[10px]">
            <button aria-label="动态观察" className={btn}>
                <svg viewBox="0 0 24 22" className="w-6 h-[22px]"><circle cx="12" cy="12" r="8.500" fill="#a9b8cb" stroke="#4a5666" /><path d="M7 8c2-3 6-3 7-2-1 3-4 4-7 2z" fill="#e4ebf3" /><circle cx="20" cy="7" r="3.500" fill="#b9c6d6" stroke="#4a5666" /><path d="M1 16c6 0 15-3 21-9M1 16l3-4" fill="none" stroke="#3c4654" strokeWidth="1.500" /></svg>
            </button>
            <button className="mt-[6px] w-6 h-[23px] bg-[#8495ae] border border-[#39424f] text-[9px] leading-3 text-[#222c3a] flex items-end justify-end pr-[2px]">2D</button>
            <button aria-label="线框" className={`${btn} mt-[6px]`}>
                <svg viewBox="0 0 24 24" className="w-6 h-6"><path d="M.500 5.500h18v18H.500zM.500 5.500l5-5h18v18l-5 5M18.500 5.500l5-5" fill="#d3e8ff" stroke="#39424f" /><path d="M5.500 5.500v13h13M.500 23.500l5-5" fill="none" stroke="#39424f" /></svg>
            </button>
            <span className="h-[15px] flex items-center"><Caret className="text-[#2f3744]" /></span>
            <button aria-label="实体" className={btn}>
                <svg viewBox="0 0 24 24" className="w-6 h-6"><path d="M.500 5.500h18v18H.500zM.500 5.500l5-5h18v18l-5 5M18.500 5.500l5-5" fill="#8495ae" stroke="#39424f" /></svg>
            </button>
            <span className="h-[15px] flex items-center"><Caret className="text-[#2f3744]" /></span>
            <button aria-label="旋转视图" className={btn}>
                <svg viewBox="0 0 24 24" className="w-6 h-6"><path d="M20 17a9.500 9.500 0 1 1 0-10" fill="none" stroke="#39424f" strokeWidth="2.500" /><path d="M22 1v8h-8z" fill="#39424f" /></svg>
            </button>
            <span className="h-[15px] flex items-center"><Caret className="text-[#2f3744]" /></span>
            <div className="w-6 border-t border-[#555d68] mb-1" />
            <button aria-label="显示设置" className={btn}>
                <svg viewBox="0 0 24 24" className="w-6 h-6"><path d="M.500 3.500l2-3h19l2 3v20H.500zM.500 3.500h23" fill="#8495ae" stroke="#39424f" /><path d="M3 6l2 2 3-3M14 6l2 2 3-3M12.500 8v13M3.500 10.500h3v3h-3zM3.500 17.500h3v3h-3zM14.500 10.500h3v3h-3zM14.500 17.500h3v3h-3zM8 12.500h3M8 19.500h3M19 12.500h3M19 19.500h3" fill="none" stroke="#26303e" /></svg>
            </button>
        </aside>
    );
}

const Screen = () => (
    <svg viewBox="0 0 30 30" className="w-[30px] h-[30px] shrink-0"><circle cx="15" cy="15" r="15" fill="#13b7f8" /><path d="M7 8h16v12H7zM13 20h4v2h2v1h-8v-1h2z" fill="#fff" /><path d="M7 18h16" stroke="#13b7f8" /></svg>
);

function CadThumb() {
    const xs = [416, 481, 541, 665, 789, 912, 1036];
    const ys = [1009, 1043, 1115, 1168, 1204];
    const notes = [[465, 980], [710, 1015], [382, 1078], [733, 1087], [446, 1155], [516, 1155], [576, 1155], [632, 1155], [685, 1155], [756, 1155], [818, 1155], [1003, 1155], [833, 1222]];
    return (
        <svg viewBox="192 907 880 405" preserveAspectRatio="none" className="w-full h-[139px] rounded-lg bg-black">
            <g stroke="#07861a" strokeWidth="2" fill="none">
                {xs.map((x) => <g key={x}><path d={`M${x} 948V1262`} opacity=".7" /><circle cx={x} cy="942" r="6" /><circle cx={x} cy="1268" r="6" /></g>)}
                {ys.map((y) => <g key={y}><path d={`M343 ${y}h60`} /><circle cx="337" cy={y} r="6" /></g>)}
                <path d="M416 956H1072M416 970H1072M416 1244H1072M416 1255H1072M352 1009V1204M364 1009V1204M706 1296h98" />
            </g>
            <path d="M390 1009H1072M390 1204H1072M408 1030V1240M481 980V1040M665 1000V1240M912 1000V1240" stroke="#6b0a5a" strokeWidth="2" strokeDasharray="18 5" fill="none" />
            <g stroke="#1a6478" strokeWidth="4" fill="none">
                <path d="M416 1008H604V1045M416 1045H1072M416 1113H1072M416 1202H1072M416 1008V1160L445 1202M481 1008V1202M541 1008V1202M604 1045V1202M665 1045V1202M718 1045V1202M789 1045V1202M851 1045V1202M912 1045V1202M965 1045V1202M1036 1045V1202M912 1176h53M665 1175h53" />
            </g>
            <path d="M425 1060h48l-10 48M490 1060h48M552 1100c0-40 10-45 48-45M800 1100c5-40 10-45 45-45M925 1100c5-40 10-45 35-45M430 1190c20-60 20-60 48-65M730 1180c10-55 10-55 55-60M800 1190c5-55 10-60 45-65M1045 1100c3-30 5-40 27-42" stroke="#14148c" strokeWidth="2" fill="none" />
            <g fill="#e6e6e6">
                {[0, 1, 2, 3, 4, 5, 6, 7, 8, 9, 10].map((i) => <path key={i} d={`M${444 + i * 56} 964h9v3h-9zM${434 + i * 58} 1239h8v3h-8zM${448 + i * 58} 1110h10v2h-10zM${425 + i * 61} 1052h3v6h-3zM${425 + i * 61} 1128h3v6h-3zM${450 + i * 60} 1200h9v2h-9z`} />)}
                <path d="M423 1018h5v16h-5zM484 1018h5v12h-5zM548 1020h8v10h-8zM607 1018h6v12h-6zM718 1214h14v6h-14zM966 1214h14v6h-14zM432 1195h16v8h-16z" opacity=".85" />
                <path d="M708 1287h58M708 1301h24" stroke="#e6e6e6" strokeWidth="7" strokeDasharray="5 2" />
                <path d="M425 1018h52M605 1054h58" stroke="#ccc" strokeWidth="2" />
            </g>
            {notes.map(([x, y], i) => (
                <g key={i}>
                    <path d={`M${x} ${y}h17`} stroke={i % 3 === 2 ? '#f03030' : '#e020e0'} strokeWidth="4" />
                    <path d={`M${x + 2} ${y + 7}h12M${x + 2} ${y + 13}h7`} stroke="#e5d51b" strokeWidth="3" />
                    <path d={`M${x + 3} ${y - 3}v22h26`} stroke="#a98f20" strokeWidth="2" fill="none" />
                </g>
            ))}
            <g stroke="#c03018" strokeWidth="2" fill="none">
                {xs.map((x) => <path key={x} d={`M${x - 4} 1041h9v9h-9zM${x - 4} 1111h9v9h-9zM${x - 4} 1198h9v9h-9z`} />)}
            </g>
        </svg>
    );
}

function ChatWindow() {
    return (
        <div className="absolute right-[54px] top-[73px] w-[408px] h-[514px] flex flex-col bg-white rounded-t-sm shadow-[0_0_6px_rgba(0,0,0,0.5)] text-[13px]">
            <div className="h-[30px] flex items-center bg-[#ccd890] pl-[9px] pr-2 shrink-0">
                <svg viewBox="0 0 14 18" className="w-[14px] h-[18px] mr-[5px]"><path d="M7 0c4 0 5 3 5 7l2 5-1 2-1-1-1 3 1 2H2l1-2-1-3-1 1-1-2 2-5c0-4 1-7 5-7z" fill="#fff" /></svg>
                <h2>雪梨的 Android手机</h2>
                <div className="ml-auto flex gap-[18px]">
                    <button aria-label="最小化聊天"><svg viewBox="0 0 12 12" className="w-3 h-3"><path d="M1 9h10" stroke="#fff" strokeWidth="2" /></svg></button>
                    <button aria-label="最大化聊天"><svg viewBox="0 0 12 12" className="w-3 h-3"><path d="M2 3h8v6H2z" fill="none" stroke="#fff" strokeWidth="2" /></svg></button>
                    <button aria-label="关闭聊天"><svg viewBox="0 0 12 12" className="w-3 h-3"><path d="M2 2l8 8M10 2l-8 8" stroke="#fff" strokeWidth="2" /></svg></button>
                </div>
            </div>
            <div className="h-11 flex items-center bg-[#eceeee] border-b border-gray-300 pl-4 pb-[3px] shrink-0">
                <button className="flex items-center gap-[7px]">
                    <svg viewBox="0 0 19 16" className="w-[19px] h-4"><path d="M1 1h15v12H1z" fill="#fff" stroke="#4aa5e8" strokeWidth="2" /><path d="M3 11l3-4 3 2 4-5v7z" fill="#4aa5e8" /><path d="M9 10h5V7l5 4.500-5 4.500v-3H9z" fill="#f5980c" /></svg>
                    导出手机相册
                </button>
                <button className="flex items-center gap-[7px] ml-[10px]">
                    <svg viewBox="0 0 16 14" className="w-4 h-[14px]"><path d="M0 1h8l2 3h6v10H0z" fill="#66b3ec" /><path d="M9 0h7v2h-6z" fill="#66b3ec" /></svg>
                    打开文件助手
                </button>
            </div>
            <div className="flex-1 min-h-0 relative pt-[2px] px-2 text-[12px]">
                <div className="h-[8px] ml-[39px] w-[308px] rounded-b bg-[#069bde]" />
                <p className="text-center text-gray-500 leading-4 mt-[9px] -ml-[6px]">2019/4/25 星期四 10:22:54</p>
                <div className="flex justify-end gap-[11px] pr-1 mt-1">
                    <div className="relative h-[39px] w-[92px] flex items-center justify-center rounded bg-[#069bde] text-white text-[13px]">
                        结婚没干过
                        <svg viewBox="0 0 6 8" className="absolute -right-[5px] top-[11px] w-[6px] h-2"><path d="M0 2l6-2-4 7-2 1z" fill="#069bde" /></svg>
                    </div>
                    <Screen />
                </div>
                <div className="flex gap-[11px] mt-[10px]">
                    <svg viewBox="0 0 30 30" className="w-[30px] h-[30px] shrink-0"><circle cx="15" cy="15" r="15" fill="#13b7f8" /><path d="M9 5h12v20H9z" fill="#fff" /><path d="M9 20.500h12M14 22.500h3" stroke="#13b7f8" /></svg>
                    <div className="relative w-[308px] h-[111px] rounded-md bg-[#e3e3e3] p-[7px]">
                        <svg viewBox="0 0 6 8" className="absolute -left-[5px] top-[10px] w-[6px] h-2"><path d="M6 2L0 0l4 7 2 1z" fill="#e3e3e3" /></svg>
                        <div className="h-full bg-white border border-[#c9d8e2] rounded-sm flex flex-col">
                            <div className="h-[64px] flex pl-2 pt-[9px] gap-[10px] border-b border-[#c9d8e2]">
                                <svg viewBox="0 0 44 44" className="w-[44px] h-[44px] -mr-1"><rect width="40" height="40" rx="2" fill="#08cfa3" /><path d="M9 30l7-15 6 10 3-5 6 10z" fill="#fff" /><circle cx="27" cy="13" r="3" fill="#fff" /><circle cx="36" cy="36" r="7.500" fill="#5ab448" /><path d="M32 36l3 3 5-5" fill="none" stroke="#fff" strokeWidth="2" /></svg>
                                <div className="leading-[19px]">
                                    <p className="text-black">仁和城邦商业4#楼建筑平面图0...t3.dwg</p>
                                    <p className="text-gray-500 text-[11px]">10.36M</p>
                                </div>
                            </div>
                            <div className="flex-1 flex items-center px-2 text-gray-500">
                                <span className="pb-1">已下载</span>
                                <div className="ml-auto flex items-center gap-[10px]">
                                    <a href="#open" className="text-[#0a8fd6]">打开</a>
                                    <a href="#copy" className="text-[#0a8fd6]">复制</a>
                                    <a href="#share" className="text-[#0a8fd6]">转发</a>
                                    <svg viewBox="0 0 14 12" className="w-[14px] h-3"><path d="M0 1.500h14M0 6h14M0 10.500h14" stroke="#3c90cc" strokeWidth="2" /></svg>
                                </div>
                            </div>
                        </div>
                    </div>
                </div>
                <div className="h-[28px] relative flex items-center justify-center mt-[1px] pt-1 pr-[6px] text-gray-500">
                    <svg viewBox="0 0 160 28" className="absolute left-[123px] top-0 w-[160px] h-7"><path d="M4 0h44l6 14-4 4c-1-3-3-5-4-5 0 6-2 9-4 11l3 2v2H9v-2l3-2c-3-2-4-6-4-11-2 1-3 3-5 5-2-6 0-13 1-18z" fill="#ebebeb" /><path d="M72 0c2 18 26 20 34 0M92 8l10 8M112 0c2 18 26 20 34 0M132 8l10 8" fill="none" stroke="#ececec" strokeWidth="3" /></svg>
                    <span className="relative">09:44:39</span>
                </div>
                <div className="flex justify-end gap-[11px] pr-1">
                    <div className="relative w-[306px] h-[154px] rounded-md bg-[#069bde] p-[7px]">
                        <CadThumb />
                        <svg viewBox="0 0 6 8" className="absolute -right-[5px] top-[11px] w-[6px] h-2"><path d="M0 2l6-2-4 7-2 1z" fill="#069bde" /></svg>
                    </div>
                    <Screen />
                </div>
                <div className="absolute right-px top-[122px] w-[10px] h-[264px] rounded-full bg-[#cbcbcb]" />
            </div>
            <div className="h-[43px] flex items-center bg-[#eceeee] border-t border-[#d0dce4] pl-2 pr-1 shrink-0">
                <svg viewBox="0 0 18 17" className="w-[18px] h-[17px]"><path d="M1 15V2c0-1 1-1 1-1h5l2 3h7c1 0 1 1 1 1v10c0 1-1 1-1 1H2c-1 0-1-1-1-1z" fill="none" stroke="#9aa0a6" strokeWidth="2" /></svg>
                <svg viewBox="0 0 16 16" className="w-4 h-4 ml-3"><path d="M2 1l8 9M14 1l-8 9" stroke="#444" strokeWidth="3" /><circle cx="4" cy="12" r="2.500" fill="none" stroke="#444" strokeWidth="2" /><circle cx="12" cy="12" r="2.500" fill="none" stroke="#444" strokeWidth="2" /></svg>
                <input aria-label="消息" className="flex-1 min-w-0 h-[27px] ml-3 bg-white border border-gray-300 rounded-sm px-1" />
                <button className="w-[60px] h-[27px] ml-[7px] bg-[#ccd890] rounded-sm">发送</button>
            </div>
        </div>
    );
}

const Rebar = ({ grade }: { grade: number }) => (
    <svg viewBox="0 0 11 12" className="inline-block w-[11px] h-3 align-[0px]" shapeRendering="crispEdges">
        <path d="M5.500 0v11M2.500 2.500h6v4h-6z" fill="none" stroke="currentColor" />
        {grade > 1 && <path d="M1 4.500h9M2 8.500h7" fill="none" stroke="currentColor" />}
    </svg>
);

// "E" marks the ribbed bar symbol and "P" the plain one
const barText = (s: string) => s.split(/([EP])/).map((p, i) => (p === 'E' ? <Rebar key={i} grade={2} /> : p === 'P' ? <Rebar key={i} grade={1} /> : p));

const COLS = ['w-[8px]', 'w-[61px]', 'w-[60px]', 'w-[61px]', 'w-[61px]', 'w-[61px]', 'w-[41px]', 'w-[41px]', 'w-[41px]', 'w-[41px]', 'w-[101px]', 'w-[82px]', 'w-[81px]', 'w-[81px]', 'w-[80px]', 'w-[81px]', 'w-[81px]', 'w-[81px]', 'w-[101px]', 'w-[82px]', 'w-[101px]', 'w-[41px]', 'w-[60px]', 'w-[81px]', 'w-[81px]', 'w-[81px]', 'w-[81px]', ''];
const HEAD: [string, number][] = [['位置', 0], ['名称', 0], ['跨号', 0], ['标高', 2], ['构件尺寸(mm)', 7], ['上通长筋', 0], ['上部钢筋', 3], ['下部钢筋', 2], ['侧面钢筋', 3], ['箍筋', 0], ['肢数', 0], ['次梁宽度', 0], ['次梁加筋', 0], ['吊筋', 0], ['吊筋锚固', 0]];
const SUB = ['起点标高', '终点标高', 'A1', 'A2', 'A3', 'A4', '跨长', '截面(B*H)', '距左边线距离', '左支座钢筋', '跨中钢筋', '右支座钢筋', '下通长筋', '下部钢筋', '侧面通长筋', '侧面原位标注筋', '拉筋'];
const ROWS = [
    ['1', '-0.05', '-0.05', '(357)', '(458)', '(325)', '', '(3409)', '(400*700)', '(200)', '2E22', '5E22', '(2E12)', '', '', '4E25', '', '', '', 'P8@100/', '4', '', '', '', ''],
    ['2', '-0.05', '-0.05', '', '(325)', '(325)', '', '(4596)', '(400*700)', '(200)', '', '5E22', '(2E12)', '5E22/2E22', '', '4E22', '', '', '', 'P8@100/', '4', '', '', '', ''],
    ['3', '-0.05', '-0.05', '', '', '', '(325)', '(2656)', '(400*700)', '(200)', '', '', '5E22/2E22', '', '', '4E16', '', '', '', 'P8@100', '4', '', '', '', ''],
];
const SOFT_COLS = [10, 11, 13, 15, 19];

function BeamTable() {
    const cell = 'border border-[#d6d6d6] px-[3px] overflow-hidden whitespace-nowrap';
    const head = 'border border-[#d0d0d0] bg-[#f0f0f0] font-normal text-[#333] overflow-hidden whitespace-nowrap';
    return (
        <section className="relative shrink-0 bg-[#f0f0f0]">
            <div className="h-1 bg-white flex justify-center">
                <button aria-label="收起面板" className="w-[100px] h-1 bg-[#616b74] flex justify-center"><Caret className="text-gray-300" /></button>
            </div>
            <div className="h-3 bg-[#d3d4da] border-y border-[#c2c3c6] flex justify-end items-center pr-[6px]">
                <button aria-label="关闭面板"><svg viewBox="0 0 6 6" className="w-[6px] h-[6px] block"><path d="M0 0l6 6M6 0L0 6" stroke="#777" strokeWidth="1.500" /></svg></button>
            </div>
            <h3 className="h-[22px] leading-[22px] px-[9px] text-gray-600 border-b border-[#c6c6c6]">梁平法表格</h3>
            <div className="h-[30px] flex items-center gap-[14px] px-[5px] text-[#222]">
                {['复制跨数据', '粘贴跨数据', '输入当前列数据', '删除当前列数据', '页面设置', '调换起始跨', '悬臂钢筋代号'].map((t, i) => (
                    <button key={t} disabled={i === 1} className={i === 1 ? 'text-gray-400' : ''}>{t}</button>
                ))}
            </div>
            <div className="h-[138px] bg-white overflow-hidden">
                <table className="w-full table-fixed border-collapse leading-4">
                    <colgroup>{COLS.map((c, i) => <col key={i} className={c} />)}</colgroup>
                    <thead>
                        <tr className="h-[17px]">
                            <th rowSpan={2} className="bg-white" />
                            {HEAD.map(([t, n]) => <th key={t} rowSpan={n ? 1 : 2} colSpan={n || 1} className={head}>{t}</th>)}
                        </tr>
                        <tr className="h-[17px]">{SUB.map((t) => <th key={t} className={head}>{t}</th>)}</tr>
                    </thead>
                    <tbody>
                        {ROWS.map((r, i) => (
                            <tr key={i} className="h-[21px]">
                                <td className="bg-[#f0f0f0] border-b border-[#d0d0d0] text-[#444]">{i + 1}</td>
                                {i === 0 && <td rowSpan={3} className={`${cell} leading-[17px]`}>&lt;S-0,S-0;<br />S-0,1/<br />S-0&gt;</td>}
                                {i === 0 && <td rowSpan={3} className={cell}>KL1(2A)</td>}
                                {r.map((v, j) => <td key={j} className={`${cell} ${SOFT_COLS.includes(j) ? 'text-[#444]' : ''}`}>{barText(v)}</td>)}
                            </tr>
                        ))}
                    </tbody>
                </table>
            </div>
            <div className="h-3 bg-white flex items-start justify-between">
                <svg viewBox="0 0 5 8" className="w-[5px] h-2 ml-[2px]"><path d="M5 0v8L0 4z" fill="#222" /></svg>
                <div className="flex-1 px-[3px]"><div className="w-[72%] h-2 rounded-full bg-[#cacaca]" /></div>
                <svg viewBox="0 0 5 8" className="w-[5px] h-2 mr-[3px]"><path d="M0 0v8l5-4z" fill="#222" /></svg>
            </div>
            <svg viewBox="174 840 150 160" className="absolute left-[174px] top-[48px] w-[150px] h-[160px] pointer-events-none">
                <path d="M184 877L183 900L187 925L194 945L202 963Q212 978 228 985Q245 991 262 990Q285 988 298 973Q307 960 313 942L313 905L310 884Q305 860 291 853Q265 851 240 854L216 857Q200 865 189 886L186 900" fill="none" stroke="#fb3838" strokeWidth="7" strokeLinecap="round" strokeLinejoin="round" />
            </svg>
        </section>
    );
}

function StatusBar() {
    const btn = 'h-[25px] border border-[#97979b] bg-[#cfcfd2] flex items-center justify-center gap-[5px] text-[#333]';
    return (
        <footer className="h-[30px] flex items-center shrink-0 bg-[#dedee1] border-t border-[#c6c6c6] text-[#222] whitespace-nowrap">
            <span className="w-[262px] ml-[3px] text-[13px]">X = 1931 Y = 806397 Z = 3715</span>
            <span className="w-[83px]">层高： 6</span>
            <span className="w-[133px]">标高： 5.95~11.95</span>
            <span className="w-[103px]">1(1)</span>
            <span className="w-[103px]">隐藏：0</span>
            <div className="flex gap-[3px]">
                <button aria-label="正交" className={`${btn} w-[25px]`}><svg viewBox="0 0 14 14" className="w-[14px] h-[14px]"><path d="M1.500 0v12.500H14M1.500 7.500h4v5" fill="none" stroke="#222" /></svg></button>
                <button aria-label="框选" className="h-[25px] w-[36px] border border-[#3c92ea] bg-white flex items-center justify-center gap-2"><svg viewBox="0 0 16 16" className="w-4 h-4"><path d="M2.500 2.500h12v12h-12z" fill="none" stroke={B} /><path d="M.500.500h4v4h-4z" fill="#fbc29a" stroke={O} /></svg><Caret /></button>
                <button aria-label="交点" className={`${btn} w-[25px] ml-[3px]`}><svg viewBox="0 0 16 16" className="w-4 h-4"><path d="M1 1l14 14M15 1L1 15" stroke="#8a8a8a" /><circle cx="8" cy="8" r="1.500" fill="#777" /></svg></button>
                <button aria-label="角度" className={`${btn} w-[36px]`}><svg viewBox="0 0 17 14" className="w-[17px] h-[14px]"><path d="M13 0L1.500 12.500H17" fill="none" stroke="#222" /><path d="M6 6h4v4H6z" fill="#222" /></svg><Caret /></button>
                <button aria-label="动态输入" className={`${btn} w-[36px]`}><svg viewBox="0 0 17 14" className="w-[17px] h-[14px]"><path d="M3.500 0v7M0 3.500h7" stroke="#222" /><path d="M6 9h11v5H6z" fill="#333" /></svg><Caret /></button>
                <button className={`${btn} w-[73px]`}>跨图层选择</button>
                <button className={`${btn} w-[61px]`}>折线选择</button>
            </div>
            <span className="ml-[6px]">按鼠标左键选择梁图元，按右键中止或 ESC 取消</span>
            <span className="ml-auto pr-9">250 FPS</span>
        </footer>
    );
}

function Taskbar() {
    const slot = 'w-[62px] h-full border-x border-t border-[#e9f6fc] bg-gradient-to-r from-[#b9dff0] to-[#6cb7dc] overflow-hidden flex justify-center';
    return (
        <div className="h-2 shrink-0 flex gap-px border-t border-[#14304f] bg-gradient-to-r from-[#3f9ccc] from-30% via-[#2472b8] via-70% to-[#14345e] overflow-hidden">
            <div className="w-[179px] h-full bg-[#22679a]">
                <svg viewBox="0 0 179 7" className="w-[179px] h-[7px]"><circle cx="27" cy="16" r="15" fill="#b5c4cf" stroke="#e6edf2" /><circle cx="78" cy="9" r="6" fill="#d7e31c" /><circle cx="91" cy="9" r="6" fill="#7ecbea" /><circle cx="143" cy="14" r="12" fill="#33a6e6" /><path d="M154 7l6-6 6 6z" fill="#f0b71e" /></svg>
            </div>
            <div className={slot}><div className="w-8 h-2 mt-1 rounded-t bg-[#5fa3ee]" /></div>
            <div className={slot}><div className="w-6 h-4 mt-1 rounded-full bg-white border-2 border-[#58b948]" /></div>
            <div className={slot}><div className="w-4 h-4 mt-1 rounded-full bg-black" /></div>
            <div className={slot}><div className="w-8 h-3 mt-1 rounded-t bg-[#2d6dbb] border border-gray-600" /></div>
            <div className="ml-auto w-[60px] pt-[2px] overflow-hidden text-[12px] leading-4 text-white">16:27</div>
            <div className="w-[14px] h-full border border-[#8ea5b8] bg-[#4b647c]" />
        </div>
    );
}

export default function App() {
    return (
        <div className="h-screen w-full relative flex flex-col overflow-hidden bg-white text-black text-[12px] leading-4 font-['Noto_Sans','Noto_Sans_CJK_SC',sans-serif]">
            <Header />
            <Ribbon />
            <FilterBar />
            <Viewport />
            <BeamTable />
            <StatusBar />
            <Taskbar />
            <ChatWindow />
        </div>
    );
}
